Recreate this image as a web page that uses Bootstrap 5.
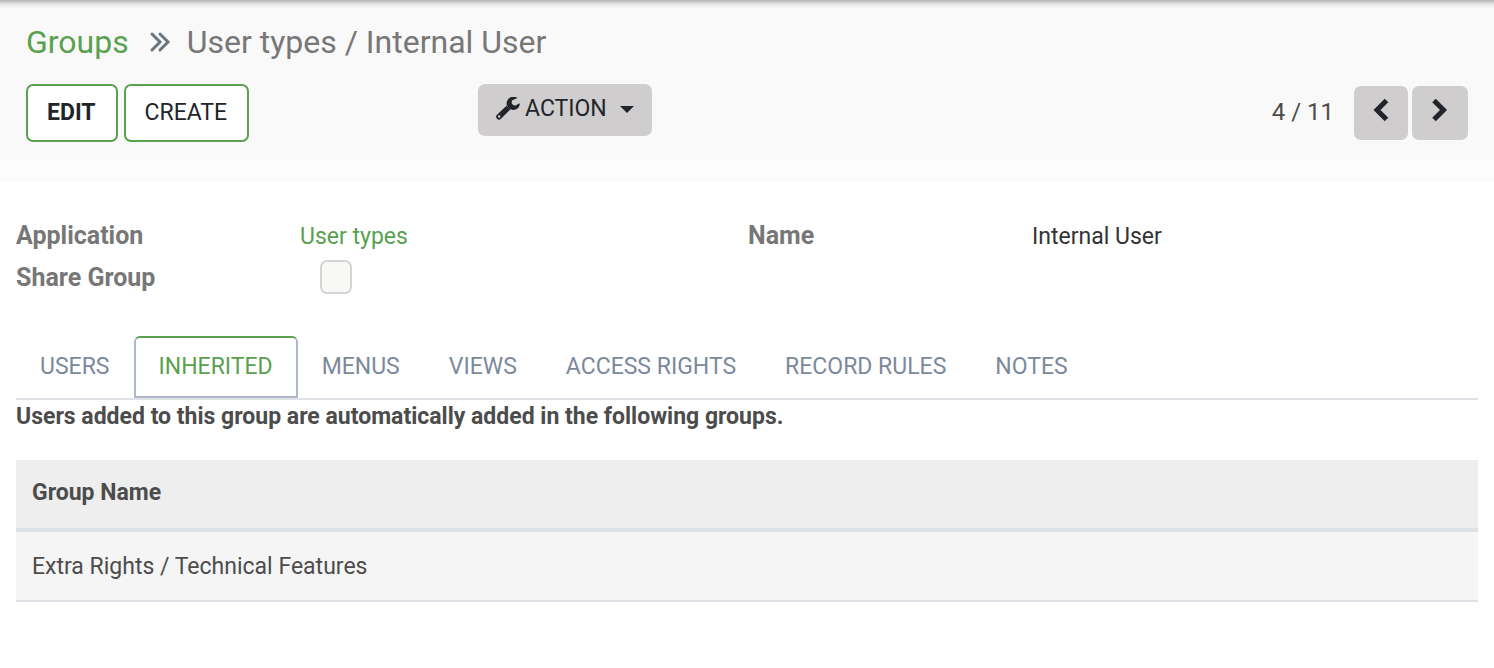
<!DOCTYPE html>
<html lang="en">
<head>
<meta charset="utf-8">
<meta name="viewport" content="width=device-width, initial-scale=1">
<title>Groups - Internal User</title>
<link href="https://cdn.jsdelivr.net/npm/bootstrap@5.3.0/dist/css/bootstrap.min.css" rel="stylesheet">
<style>
  :root { --brand: #59a14f; --line: #dee2e6; --ink: #4c4c4c; }
  body { font-family: Roboto, sans-serif; font-size: 23px; line-height: 38px; color: var(--ink); background: #fff; }
  a { color: var(--brand); text-decoration: none; }
  a:hover { color: #3f7d36; }
  .control-panel { background: linear-gradient(#b4b4b4, #e4e4e4 4px, #f9f9f9 8px); border-bottom: 22px solid #fcfcfc; padding: 22px 26px 18px; }
  .crumbs { font-size: 32px; line-height: 40px; margin-bottom: 22px; color: #777; }
  .crumbs .breadcrumb-item + .breadcrumb-item { padding-left: 0; }
  .crumbs .active { color: #777; }
  .toolbar { display: grid; grid-template-columns: 452fr 990fr; align-items: start; }
  .btn { font-size: 23px; line-height: 38px; color: #212529; border-radius: 7px; }
  .record-buttons { gap: 6px; }
  .btn-record { background: #fff; border: 2px solid var(--brand); padding: 8px 20px 8px 19px; }
  .btn-grey { background: #cfcdce; border: 0; }
  .btn-action { padding: 6px 18px 8px; }
  .btn-action::after { margin-left: 13px; border-width: 7px 7px 0; }
  .btn-page { padding: 12px 17px 18px; }
  .btn-page svg { display: block; }
  .pager { margin-top: 2px; font-size: 24px; line-height: 52px; }
  .sheet { padding: 36px 16px 0; }
  .field-columns { display: grid; grid-template-columns: 1fr 1fr; gap: 2px; }
  .field { display: grid; grid-template-columns: 284fr 446fr; min-height: 42px; }
  .field-label { font-weight: 700; color: #777; font-size: 25px; line-height: 36px; }
  .field-text { color: #333; }
  .form-check-input.share { width: 32px; height: 34px; margin: 0 0 0 20px; border: 2px solid #d5d5d5; border-radius: 7px; background-color: #f8f8f7; }
  .form-check-input.share:disabled { opacity: 1; }
  .nav-tabs { border-bottom: 2px solid var(--line); margin-top: 34px; }
  .nav-tabs .nav-link { color: #7c899c; border: 2px solid transparent; border-radius: 6px 6px 0 0; padding: 10px 23px 10px 22px; margin: 0; text-transform: uppercase; }
  .nav-tabs .nav-link.active { color: var(--brand); border-color: var(--brand) #adb9cb #adb9cb; background: #fff; }
  .hint { font-weight: 700; line-height: 34px; margin-bottom: 26px; }
  .groups { --bs-table-bg: transparent; margin: 0; color: var(--ink); }
  .groups th, .groups td { padding: 14px 16px 16px; color: var(--ink); line-height: 38px; }
  .groups thead th { background: #eee; border-bottom: 4px solid var(--line); }
  .groups tbody td { background: #f5f5f5; border-bottom: 2px solid var(--line); padding-top: 16px; padding-bottom: 14px; }
  .groups > tbody { border-top: 0; }
</style>
</head>
<body>
<header class="control-panel">
  <nav aria-label="breadcrumb">
    <ol class="breadcrumb crumbs align-items-center">
      <li class="breadcrumb-item"><a href="#">Groups</a></li>
      <li class="d-flex mx-3 ps-1" aria-hidden="true">
        <svg width="22" height="22" viewBox="0 0 22 22" fill="none" stroke="#6c757d" stroke-width="3" stroke-linecap="round"><path d="M3 3l8 8-8 8M11 3l8 8-8 8"/></svg>
      </li>
      <li class="breadcrumb-item active" aria-current="page">User types / Internal User</li>
    </ol>
  </nav>
  <div class="toolbar">
    <div class="d-flex record-buttons">
      <button type="button" class="btn btn-record fw-bold">EDIT</button>
      <button type="button" class="btn btn-record">CREATE</button>
    </div>
    <div class="d-flex justify-content-between align-items-start">
      <div class="dropdown">
        <button type="button" class="btn btn-grey btn-action dropdown-toggle d-flex align-items-center" data-bs-toggle="dropdown" aria-expanded="false">
          <svg class="me-1" width="25" height="24" viewBox="0 0 25 24" aria-hidden="true"><path fill="#212529" fill-rule="evenodd" d="M10.800 8.600 1 17.700a2.900 2.900 0 0 0 0 4 2.800 2.800 0 0 0 4 .1L14.300 12.500a8 8 0 0 1-3.500-3.900ZM3.200 18.300a1.200 1.200 0 1 1 0 2.400 1.200 1.200 0 0 1 0-2.400ZM21.400.9C20.100.2 18.600-.2 17.100-.2a6.600 6.600 0 1 0 6.400 8.600c.3-.9.400-1.800 0-2.200l-4.500 2.600-3.200-1.900V3.400Z"/></svg>ACTION
        </button>
        <ul class="dropdown-menu"><li><a class="dropdown-item" href="#">Delete</a></li></ul>
      </div>
      <div class="d-flex align-items-start gap-1 pager">
        <span class="me-3">4 / 11</span>
        <button type="button" class="btn btn-grey btn-page" aria-label="Previous">
          <svg width="20" height="24" viewBox="0 0 20 24" fill="none" stroke="#212529" stroke-width="5" aria-hidden="true"><path d="M15.500 2.500 6 12l9.500 9.500"/></svg>
        </button>
        <button type="button" class="btn btn-grey btn-page" aria-label="Next">
          <svg width="22" height="24" viewBox="0 0 22 24" fill="none" stroke="#212529" stroke-width="5" aria-hidden="true"><path d="M5 2.500 14.500 12 5 21.500"/></svg>
        </button>
      </div>
    </div>
  </div>
</header>
<main class="sheet">
  <div class="field-columns">
    <div>
      <div class="field"><span class="field-label">Application</span><a href="#">User types</a></div>
      <div class="field"><label class="field-label" for="share">Share Group</label><div class="d-flex"><input class="form-check-input share" type="checkbox" id="share" disabled></div></div>
    </div>
    <div>
      <div class="field"><span class="field-label">Name</span><span class="field-text">Internal User</span></div>
    </div>
  </div>
  <ul class="nav nav-tabs">
    <li class="nav-item"><a class="nav-link" href="#">Users</a></li>
    <li class="nav-item"><a class="nav-link active" aria-current="page" href="#">Inherited</a></li>
    <li class="nav-item"><a class="nav-link" href="#">Menus</a></li>
    <li class="nav-item"><a class="nav-link" href="#">Views</a></li>
    <li class="nav-item"><a class="nav-link" href="#">Access Rights</a></li>
    <li class="nav-item"><a class="nav-link" href="#">Record Rules</a></li>
    <li class="nav-item"><a class="nav-link" href="#">Notes</a></li>
  </ul>
  <p class="hint">Users added to this group are automatically added in the following groups.</p>
  <table class="table groups">
    <thead><tr><th scope="col">Group Name</th></tr></thead>
    <tbody><tr><td>Extra Rights / Technical Features</td></tr></tbody>
  </table>
</main>
<script src="https://cdn.jsdelivr.net/npm/bootstrap@5.3.0/dist/js/bootstrap.bundle.min.js"></script>
</body>
</html>
